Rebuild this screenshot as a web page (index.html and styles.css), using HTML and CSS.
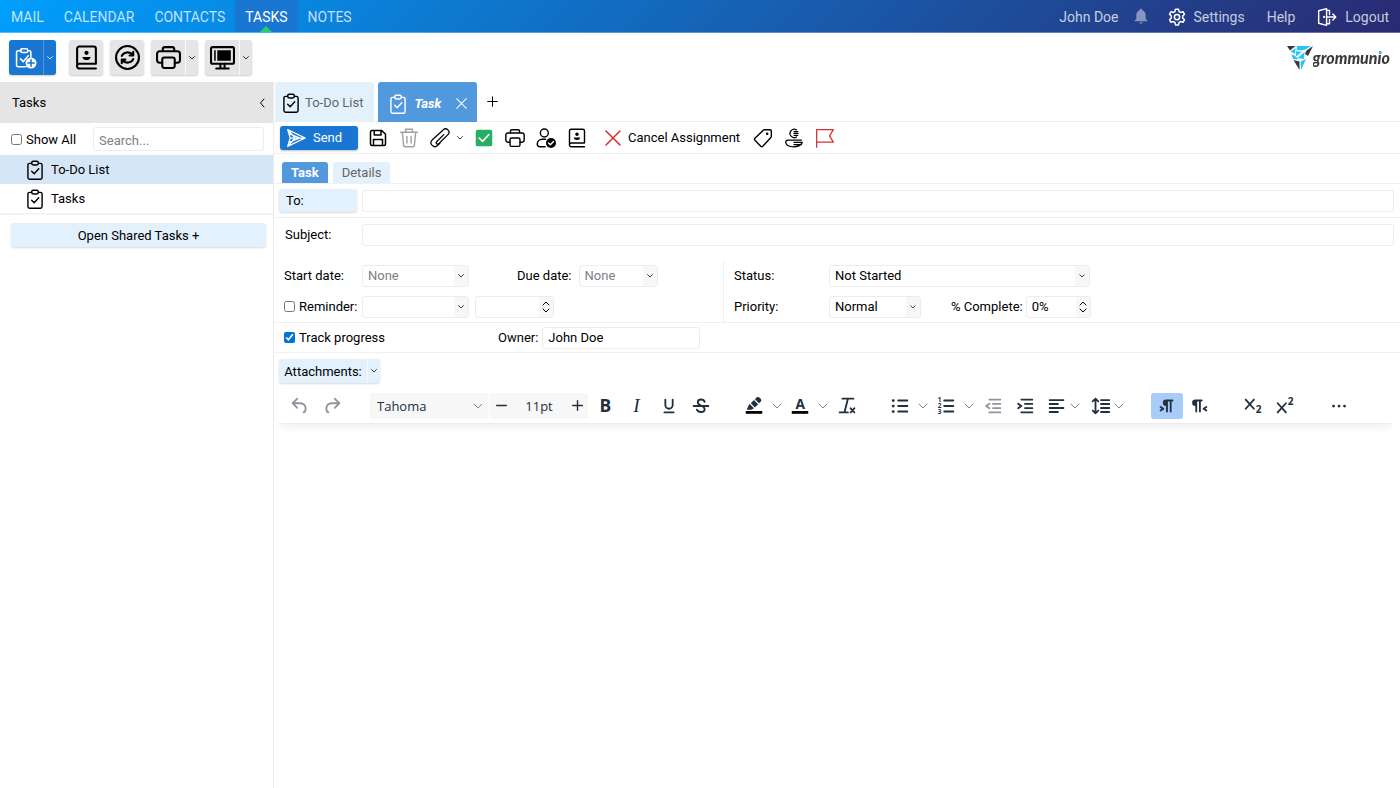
FILE: index.html
```html
<!DOCTYPE html>
<html lang="en">
<head>
    <meta charset="UTF-8">
    <meta name="viewport" content="width=device-width, initial-scale=1.0">
    <title>grommunio Web - Tasks</title>
    <link rel="stylesheet" href="styles.css">
</head>
<body>
    <!-- icon sprite -->
    <svg class="sprite" aria-hidden="true">
        <symbol id="i-task" viewBox="0 0 24 24"><path d="M8 4H5.500a2 2 0 0 0-2 2v15a2 2 0 0 0 2 2h13a2 2 0 0 0 2-2V6a2 2 0 0 0-2-2H16"/><rect x="8" y="1.500" width="8" height="4.500" rx="2"/><path d="m8 13.500 3 3 5.500-6"/></symbol>
        <symbol id="i-newtask" viewBox="0 0 24 24"><path d="M7 4H3.500A1.800 1.800 0 0 0 1.700 5.800v14a1.800 1.800 0 0 0 1.800 1.800H12M14 4h1.500a1.800 1.800 0 0 1 1.800 1.800V11"/><rect x="6" y="2" width="8" height="4" rx="1.800"/><path d="m6 13 3 3 5.500-6.500"/><circle cx="17.500" cy="17.500" r="6" fill="currentColor" stroke="none"/><path class="on-blue" d="M14 17.500h7M17.500 14v7"/></symbol>
        <symbol id="i-book" viewBox="0 0 24 24"><path d="M21 18H5a2 2 0 0 0-2 2 2 2 0 0 0 2 2.500h16M3 20V3.500A2 2 0 0 1 5 1.500h14a2 2 0 0 1 2 2V18"/><circle cx="12" cy="7.500" r="2" fill="currentColor" stroke="none"/><path d="M8 11.500h8q-.5 3-4 3t-4-3z" fill="currentColor" stroke="none"/></symbol>
        <symbol id="i-refresh" viewBox="0 0 24 24"><circle cx="12" cy="12" r="11"/><path d="M6.500 10.500C8 7 14 5.500 17 9.500M17.500 6.500v3.500H14M17.500 13.500C16 17 10 18.500 7 14.500M6.500 17.500V14H10"/></symbol>
        <symbol id="i-print" viewBox="0 0 24 24"><path d="M6.500 6V4a2 2 0 0 1 2-2h7a2 2 0 0 1 2 2v2M6 17H3.500A2.500 2.500 0 0 1 1 14.500v-6A2.500 2.500 0 0 1 3.500 6h17A2.500 2.500 0 0 1 23 8.500v6a2.500 2.500 0 0 1-2.500 2.500H18"/><rect x="6" y="12" width="12" height="10" rx="2"/></symbol>
        <symbol id="i-screen" viewBox="0 0 24 24"><rect x="1" y="2" width="22" height="16" rx="1.500"/><path d="M4 5h1.500v10H4zM7 5h13v10H7z" fill="currentColor" stroke="none"/><path d="M10 18v4M14 18v4M6 22.500h12"/></symbol>
        <symbol id="i-chev" viewBox="0 0 8 8"><path d="m1.500 2.500 2.500 2.500 2.500-2.500"/></symbol>
        <symbol id="i-left" viewBox="0 0 8 12"><path d="M6 2 2.500 6 6 10"/></symbol>
        <symbol id="i-spin" viewBox="0 0 10 14"><path d="M2 5l3-3 3 3M2 9l3 3 3-3"/></symbol>
        <symbol id="i-x" viewBox="0 0 16 16"><path d="M1 1l14 14M15 1 1 15"/></symbol>
        <symbol id="i-plus" viewBox="0 0 16 16"><path d="M8 1v14M1 8h14"/></symbol>
        <symbol id="i-minus" viewBox="0 0 16 16"><path d="M1 8h14"/></symbol>
        <symbol id="i-bell" viewBox="0 0 24 24"><path fill="currentColor" stroke="none" d="M12 1a2 2 0 0 0-2 2v.5C6.500 4.500 5 7.500 5 11v5l-2.500 3v1h19v-1L19 16v-5c0-3.500-1.500-6.500-5-7.500V3a2 2 0 0 0-2-2zM9.500 21.500a2.500 2 0 0 0 5 0z"/></symbol>
        <symbol id="i-gear" viewBox="0 0 24 24"><circle cx="12" cy="12" r="3.500"/><path d="M10 1.500h4l.8 3.200 2 1.200 3.200-1 2 3.500-2.400 2.300v2.600l2.400 2.300-2 3.500-3.200-1-2 1.200-.8 3.200h-4l-.8-3.200-2-1.200-3.200 1-2-3.500 2.400-2.300v-2.600L2 8.400l2-3.500 3.200 1 2-1.200z"/></symbol>
        <symbol id="i-door" viewBox="0 0 24 24"><path d="M2 4.500 11.500 2v20L2 19.500zM11.500 4H15v5M11.500 20H15v-5M12 12h10M19 8.500l3.500 3.500-3.500 3.500"/><circle cx="8.500" cy="12" r=".5"/></symbol>
        <symbol id="i-send" viewBox="0 0 24 24"><path d="M2 2 23 12 2 22l3-10zM5 12h17M2 2l9 10-9 10M4 7l13 5-13 5"/></symbol>
        <symbol id="i-save" viewBox="0 0 24 24"><path d="M2 4a2 2 0 0 1 2-2h13l5 5v13a2 2 0 0 1-2 2H4a2 2 0 0 1-2-2zM7 2v6h9V2M6 22v-8h12v8"/></symbol>
        <symbol id="i-trash" viewBox="0 0 24 24"><path d="M2 5h20M8 5V1.500h8V5M4 5l1.500 16a2 2 0 0 0 2 1.500h9a2 2 0 0 0 2-1.500L20 5M9.500 10v8M14.500 10v8"/></symbol>
        <symbol id="i-clip" viewBox="0 0 24 24"><path d="m16.500 8-8.500 8.500a1.700 1.700 0 0 0 2.500 2.400L21.500 8a4 4 0 0 0-5.700-5.700L2.500 14.500a4.600 4.600 0 0 0 6.500 6.500l3-3"/></symbol>
        <symbol id="i-check" viewBox="0 0 24 24"><rect x="1" y="1" width="22" height="22" rx="2.500" fill="currentColor" stroke="none"/><path class="on-green" d="m5.500 12 4.500 4.500 8.500-9"/></symbol>
        <symbol id="i-assign" viewBox="0 0 24 24"><circle cx="10" cy="6" r="4.800"/><path d="M11 22.500H4.500A3 3 0 0 1 1.500 19.500C1.500 16 4 13.500 7.500 13.500h4"/><circle cx="18" cy="18" r="6" fill="currentColor" stroke="none"/><path class="on-black" d="m15 18 2.200 2.200 3.800-4"/></symbol>
        <symbol id="i-tag" viewBox="0 0 24 24"><path d="M14 2h6.500A1.500 1.500 0 0 1 22 3.500V10q0 1-.8 1.800l-9.500 10q-1.200 1.200-2.400 0l-7-7q-1.200-1.200 0-2.400l10-9.700Q13 2 14 2z"/><circle cx="17" cy="7" r="1.500" fill="currentColor" stroke="none"/></symbol>
        <symbol id="i-private" viewBox="0 0 24 24"><path d="M15 2.300a5 5 0 1 0 0 8.400M12 4.300h4.500M12 6.500h5M12 8.700h4.500M21 14.500H5a3 3 0 0 0-3 3q1.500 5 9.500 5 7.500 0 9.800-4M12 17.300h10M12 19.900h9"/></symbol>
        <symbol id="i-flag" viewBox="0 0 24 24"><path d="M2 23V2h20l-4.500 7.500L22 17H2"/></symbol>
        <symbol id="i-undo" viewBox="0 0 24 24"><path d="M9 4 4 9l5 5M4 9h8c7 0 7.500 8 4 10"/></symbol>
        <symbol id="i-redo" viewBox="0 0 24 24"><path d="m15 4 5 5-5 5M20 9h-8c-7 0-7.500 8-4 10"/></symbol>
        <symbol id="i-down" viewBox="0 0 10 10"><path d="m1 3 4 4 4-4"/></symbol>
        <symbol id="i-bold" viewBox="0 0 24 24"><text x="6" y="19" font-size="19" font-weight="700">B</text></symbol>
        <symbol id="i-italic" viewBox="0 0 24 24"><text class="serif" x="8" y="19" font-size="21" font-style="italic">I</text></symbol>
        <symbol id="i-underline" viewBox="0 0 24 24"><path d="M8 5v6a4 4 0 0 0 8 0V5M7 19h10"/></symbol>
        <symbol id="i-strike" viewBox="0 0 24 24"><path d="M16 7.500C15 4 8.500 4 8.500 8c0 4.500 7.500 3 7.500 7.500 0 4-7 4-8.500.5M4 12h16"/></symbol>
        <symbol id="i-marker" viewBox="0 0 24 24"><path d="M3 19h18" class="bar"/><path fill="currentColor" stroke="none" d="m4 16 3-6.500 5 5L9 16zM8.500 9 12 5.500 16.500 10 13 13.500zM13 4.500l2-2q1.500-1 3 .3l1.500 1.600q1 1.400 0 2.700L17.500 9z"/></symbol>
        <symbol id="i-color" viewBox="0 0 24 24"><path d="M3 19h18" class="bar"/><text x="7" y="15" font-size="15" font-weight="700">A</text></symbol>
        <symbol id="i-clear" viewBox="0 0 24 24"><path d="M7 4h12M13 4l-3.500 14M4 19h9M16 14.500l4 4.500M20 14.500 16 19"/></symbol>
        <symbol id="i-bullets" viewBox="0 0 24 24"><path d="M10 6h10M10 12h10M10 18h10"/><path d="M4.500 6h.2M4.500 12h.2M4.500 18h.2" class="dots"/></symbol>
        <symbol id="i-numbers" viewBox="0 0 24 24"><path d="M10 6h10M10 12h10M10 18h10"/><text font-size="7" font-weight="700"><tspan x="3" y="8">1</tspan><tspan x="3" y="14.500">2</tspan><tspan x="3" y="21">3</tspan></text></symbol>
        <symbol id="i-outdent" viewBox="0 0 24 24"><path d="M8 5h12M12 9.700h8M12 14.300h8M8 19h12M8 9.500 4.500 12 8 14.500"/></symbol>
        <symbol id="i-indent" viewBox="0 0 24 24"><path d="M8 5h12M12 9.700h8M12 14.300h8M8 19h12M4.500 9.500 8 12l-3.500 2.500"/></symbol>
        <symbol id="i-align" viewBox="0 0 24 24"><path d="M4 5.500h15M4 9.800h9M4 14.200h15M4 18.500h9"/></symbol>
        <symbol id="i-lines" viewBox="0 0 24 24"><path d="M12 5.500h9M12 9.800h9M12 14.200h9M12 18.500h9M6 4v16M3 7l3-3 3 3M3 17l3 3 3-3"/></symbol>
        <symbol id="i-ltr" viewBox="0 0 24 24"><path fill="currentColor" stroke="none" d="M11 5h7a1 1 0 0 1 0 2h-1v11a1 1 0 0 1-2 0V7h-2v11a1 1 0 0 1-2 0v-6a3.500 3.500 0 0 1 0-7z"/><path d="M5 13l3 2-3 2"/></symbol>
        <symbol id="i-rtl" viewBox="0 0 24 24"><path fill="currentColor" stroke="none" d="M8 5h7a1 1 0 0 1 0 2h-1v11a1 1 0 0 1-2 0V7h-2v11a1 1 0 0 1-2 0v-6a3.500 3.500 0 0 1 0-7z"/><path d="M20 13l-3 2 3 2"/></symbol>
        <symbol id="i-sub" viewBox="0 0 24 24"><path d="m4 5 9 10M13 5 4 15"/><text x="15" y="20" font-size="11" font-weight="700">2</text></symbol>
        <symbol id="i-sup" viewBox="0 0 24 24"><path d="m4 9 9 10M13 9 4 19"/><text x="15" y="11" font-size="11" font-weight="700">2</text></symbol>
        <symbol id="i-more" viewBox="0 0 24 24"><path d="M6 12h.1M12 12h.1M18 12h.1" class="dots"/></symbol>
        <symbol id="i-logo" viewBox="0 0 26 24"><path class="dark" d="M0 0h8.500L3 4.500zM19.500 4.500 26 0l-5 10-3-2zM6.500 14l6 1.500V24z"/><path class="cyan" d="M10 0h14l-5.500 3.500-4 1L9.500 4zM3.500 5.500 8.500 2 8 8zM9 5l5.500 1L9 10.500zM10.500 12l7-6-.5 7zM4.500 8.500l3 1L12 13.500 6 13zM13.500 15.500 19 13 14 24z"/></symbol>
    </svg>

    <header class="topbar">
        <nav class="nav">
            <a href="#">MAIL</a>
            <a href="#">CALENDAR</a>
            <a href="#">CONTACTS</a>
            <a href="#" class="active">TASKS</a>
            <a href="#">NOTES</a>
        </nav>
        <nav class="user-nav">
            <a href="#">John Doe</a>
            <button class="bell" aria-label="Reminders"><svg class="ico s16"><use href="#i-bell"/></svg></button>
            <a href="#"><svg class="ico s18"><use href="#i-gear"/></svg>Settings</a>
            <a href="#">Help</a>
            <a href="#"><svg class="ico s20"><use href="#i-door"/></svg>Logout</a>
        </nav>
    </header>

    <div class="toolbar">
        <div class="tool primary">
            <button aria-label="New task"><svg class="ico s22"><use href="#i-newtask"/></svg></button>
            <button class="arrow" aria-label="More new items"><svg class="ico s8"><use href="#i-chev"/></svg></button>
        </div>
        <div class="tool"><button aria-label="Address book"><svg class="ico s24"><use href="#i-book"/></svg></button></div>
        <div class="tool"><button aria-label="Refresh"><svg class="ico s24"><use href="#i-refresh"/></svg></button></div>
        <div class="tool">
            <button aria-label="Print"><svg class="ico s24"><use href="#i-print"/></svg></button>
            <button class="arrow" aria-label="Print options"><svg class="ico s8"><use href="#i-chev"/></svg></button>
        </div>
        <div class="tool">
            <button aria-label="View"><svg class="ico s24"><use href="#i-screen"/></svg></button>
            <button class="arrow" aria-label="View options"><svg class="ico s8"><use href="#i-chev"/></svg></button>
        </div>
        <a href="#" class="logo"><svg class="logo-mark"><use href="#i-logo"/></svg><span>grommunio</span></a>
    </div>

    <div class="content">
        <aside class="sidebar">
            <div class="side-head">
                <span>Tasks</span>
                <button aria-label="Collapse"><svg class="ico collapse"><use href="#i-left"/></svg></button>
            </div>
            <div class="side-filter">
                <label><input type="checkbox">Show All</label>
                <input type="text" class="search" placeholder="Search..." aria-label="Search">
            </div>
            <ul class="folders">
                <li class="selected"><a href="#"><svg class="ico s20"><use href="#i-task"/></svg>To-Do List</a></li>
                <li><a href="#"><svg class="ico s20"><use href="#i-task"/></svg>Tasks</a></li>
            </ul>
            <button class="shared">Open Shared Tasks +</button>
        </aside>

        <main class="main">
            <div class="tabs">
                <a href="#" class="tab"><svg class="ico s20"><use href="#i-task"/></svg>To-Do List</a>
                <div class="tab current">
                    <svg class="ico s20"><use href="#i-task"/></svg><span>Task</span>
                    <button aria-label="Close tab"><svg class="ico thin s11"><use href="#i-x"/></svg></button>
                </div>
                <button class="add-tab" aria-label="New tab"><svg class="ico thin s11"><use href="#i-plus"/></svg></button>
            </div>

            <div class="actions">
                <button class="send"><svg class="ico s20"><use href="#i-send"/></svg>Send</button>
                <button class="act" aria-label="Save"><svg class="ico s18"><use href="#i-save"/></svg></button>
                <button class="act faded" aria-label="Delete"><svg class="ico s20"><use href="#i-trash"/></svg></button>
                <button class="act" aria-label="Attach"><svg class="ico thin s20"><use href="#i-clip"/></svg></button>
                <button class="arrow" aria-label="Attach options"><svg class="ico s8"><use href="#i-chev"/></svg></button>
                <button class="act green" aria-label="Mark complete"><svg class="ico s18"><use href="#i-check"/></svg></button>
                <button class="act" aria-label="Print"><svg class="ico s20"><use href="#i-print"/></svg></button>
                <button class="act" aria-label="Assign task"><svg class="ico s20"><use href="#i-assign"/></svg></button>
                <button class="act" aria-label="Address book"><svg class="ico s20"><use href="#i-book"/></svg></button>
                <button class="cancel"><svg class="ico thin s16"><use href="#i-x"/></svg>Cancel Assignment</button>
                <button class="act" aria-label="Categories"><svg class="ico s20"><use href="#i-tag"/></svg></button>
                <button class="act" aria-label="Private"><svg class="ico thin s20"><use href="#i-private"/></svg></button>
                <button class="act red" aria-label="Flag"><svg class="ico thin s20"><use href="#i-flag"/></svg></button>
            </div>

            <div class="subtabs">
                <button class="current">Task</button>
                <button>Details</button>
            </div>

            <div class="row to-row">
                <button class="to">To:</button>
                <input type="text" class="field" aria-label="To">
            </div>
            <div class="row subject-row">
                <label for="subject">Subject:</label>
                <input type="text" id="subject" class="field">
            </div>

            <div class="details">
                <div class="dates">
                    <div class="line">
                        <label for="start" class="lead">Start date:</label>
                        <div class="combo w107"><input type="text" id="start" placeholder="None"><button aria-label="Pick start date"><svg class="ico s8"><use href="#i-chev"/></svg></button></div>
                        <label for="due" class="due">Due date:</label>
                        <div class="combo w79"><input type="text" id="due" placeholder="None"><button aria-label="Pick due date"><svg class="ico s8"><use href="#i-chev"/></svg></button></div>
                    </div>
                    <div class="line">
                        <label class="lead check"><input type="checkbox">Reminder:</label>
                        <div class="combo w107"><input type="text" aria-label="Reminder date"><button aria-label="Pick reminder date"><svg class="ico s8"><use href="#i-chev"/></svg></button></div>
                        <div class="combo w79 second"><input type="text" aria-label="Reminder time"><button aria-label="Change time"><svg class="ico spin"><use href="#i-spin"/></svg></button></div>
                    </div>
                </div>
                <div class="status">
                    <div class="line">
                        <label for="status" class="lead">Status:</label>
                        <select id="status" class="w261"><option>Not Started</option><option>In Progress</option><option>Complete</option></select>
                    </div>
                    <div class="line">
                        <label for="priority" class="lead">Priority:</label>
                        <select id="priority" class="w92"><option>Normal</option><option>Low</option><option>High</option></select>
                        <label for="percent" class="percent">% Complete:</label>
                        <div class="combo w65"><input type="text" id="percent" value="0%"><button aria-label="Change percent"><svg class="ico spin"><use href="#i-spin"/></svg></button></div>
                    </div>
                </div>
            </div>

            <div class="row track-row">
                <label class="check"><input type="checkbox" checked>Track progress</label>
                <label for="owner" class="owner">Owner:</label>
                <input type="text" id="owner" class="field" value="John Doe">
            </div>

            <div class="attachments">
                <button>Attachments:</button>
                <button class="arrow" aria-label="Attachment options"><svg class="ico s8"><use href="#i-chev"/></svg></button>
            </div>

            <div class="editor-bar">
                <div class="group dim">
                    <button aria-label="Undo"><svg class="ico"><use href="#i-undo"/></svg></button>
                    <button aria-label="Redo"><svg class="ico"><use href="#i-redo"/></svg></button>
                </div>
                <div class="group">
                    <select class="font" aria-label="Font"><option>Tahoma</option><option>Arial</option></select>
                    <div class="size">
                        <button aria-label="Smaller"><svg class="ico s11"><use href="#i-minus"/></svg></button>
                        <input type="text" value="11pt" aria-label="Font size">
                        <button aria-label="Larger"><svg class="ico s11"><use href="#i-plus"/></svg></button>
                    </div>
                    <button aria-label="Bold"><svg class="ico"><use href="#i-bold"/></svg></button>
                    <button aria-label="Italic"><svg class="ico"><use href="#i-italic"/></svg></button>
                    <button aria-label="Underline"><svg class="ico"><use href="#i-underline"/></svg></button>
                    <button aria-label="Strikethrough"><svg class="ico"><use href="#i-strike"/></svg></button>
                </div>
                <div class="group">
                    <button class="wide" aria-label="Highlight"><svg class="ico"><use href="#i-marker"/></svg><svg class="ico drop"><use href="#i-down"/></svg></button>
                    <button class="wide" aria-label="Text color"><svg class="ico"><use href="#i-color"/></svg><svg class="ico drop"><use href="#i-down"/></svg></button>
                    <button aria-label="Clear formatting"><svg class="ico"><use href="#i-clear"/></svg></button>
                </div>
                <div class="group">
                    <button class="wide" aria-label="Bullet list"><svg class="ico"><use href="#i-bullets"/></svg><svg class="ico drop"><use href="#i-down"/></svg></button>
                    <button class="wide" aria-label="Numbered list"><svg class="ico"><use href="#i-numbers"/></svg><svg class="ico drop"><use href="#i-down"/></svg></button>
                    <button class="dim" aria-label="Decrease indent"><svg class="ico"><use href="#i-outdent"/></svg></button>
                    <button aria-label="Increase indent"><svg class="ico"><use href="#i-indent"/></svg></button>
                    <button class="menu" aria-label="Align"><svg class="ico"><use href="#i-align"/></svg><svg class="ico drop"><use href="#i-down"/></svg></button>
                    <button class="menu" aria-label="Line height"><svg class="ico"><use href="#i-lines"/></svg><svg class="ico drop"><use href="#i-down"/></svg></button>
                </div>
                <div class="group">
                    <button class="on" aria-label="Left to right"><svg class="ico"><use href="#i-ltr"/></svg></button>
                    <button aria-label="Right to left"><svg class="ico"><use href="#i-rtl"/></svg></button>
                </div>
                <div class="group">
                    <button aria-label="Subscript"><svg class="ico"><use href="#i-sub"/></svg></button>
                    <button aria-label="Superscript"><svg class="ico"><use href="#i-sup"/></svg></button>
                </div>
                <div class="group">
                    <button aria-label="More"><svg class="ico"><use href="#i-more"/></svg></button>
                </div>
            </div>
            <div class="editor" contenteditable="true" role="textbox" aria-label="Task body"></div>
        </main>
    </div>
</body>
</html>
```
FILE: styles.css
```css
* {
    box-sizing: border-box;
}
body {
    margin: 0;
    min-height: 100vh;
    display: flex;
    flex-direction: column;
    font-family: Roboto, sans-serif;
    font-size: 13px;
    color: #000;
    background-color: #fff;
}
button, input, select {
    font: inherit;
    color: inherit;
}
button {
    display: flex;
    align-items: center;
    justify-content: center;
    margin: 0;
    padding: 0;
    border: none;
    background: none;
    cursor: pointer;
}
a {
    color: inherit;
    text-decoration: none;
}
input[type="text"] {
    min-width: 0;
    outline: none;
}
input::placeholder {
    color: #808080;
}
input[type="checkbox"] {
    width: 11px;
    height: 11px;
    margin: 0 4px 0 0;
    accent-color: #0075d7;
}

/* icons */
.sprite {
    display: none;
}
.ico {
    flex: none;
    width: 22px;
    height: 22px;
    fill: none;
    stroke: currentColor;
    stroke-width: 2;
    stroke-linecap: round;
    stroke-linejoin: round;
}
.s8 { width: 8px; height: 8px; stroke-width: 1; opacity: 0.75; }
.s11 { width: 11px; height: 11px; }
.s16 { width: 16px; height: 16px; }
.s18 { width: 18px; height: 18px; }
.s20 { width: 20px; height: 20px; stroke-width: 1.7; }
.s22 { width: 22px; height: 22px; stroke-width: 1.7; }
.s24 { width: 25px; height: 25px; }
.collapse { width: 8px; height: 12px; stroke-width: 1; }
.spin { width: 10px; height: 14px; stroke-width: 1; }
.ico.thin {
    stroke-width: 1.5;
}
symbol text {
    fill: currentColor;
    stroke: none;
    font-family: "Open Sans", sans-serif;
}
symbol .serif {
    font-family: "Liberation Serif", serif;
}
.on-blue { stroke: #1976d2; }
.on-green { stroke: #fff; }
.on-black { stroke: #fff; }
.bar { stroke: #000; stroke-width: 3; stroke-linecap: butt; }
.dots { stroke-width: 3; }

/* top bar */
.topbar {
    display: flex;
    justify-content: space-between;
    height: 33px;
    background: linear-gradient(135deg, #009ffd, #2a2a72);
    border-bottom: 1px solid rgba(255, 255, 255, 0.3);
    color: rgba(255, 255, 255, 0.75);
    font-size: 14px;
}
.nav, .user-nav {
    display: flex;
}
.nav {
    padding-left: 1px;
}
.nav a, .user-nav a {
    display: flex;
    align-items: center;
    gap: 8px;
    padding: 1px 10px 0;
}
.user-nav a {
    padding: 1px 11px 0;
}
.user-nav .ico {
    color: #fff;
}
.user-nav .bell {
    padding: 0 8px 0 3px;
}
.user-nav .bell .ico {
    color: #8795c0;
}
.nav .active {
    position: relative;
    background-color: #1976d2;
    color: #fff;
}
.nav .active::after {
    content: "";
    position: absolute;
    bottom: 0;
    left: 50%;
    margin-left: -6px;
    border: 6px solid transparent;
    border-top: none;
    border-bottom-color: #2ecc71;
}

/* main toolbar */
.toolbar {
    display: flex;
    align-items: center;
    gap: 7px;
    height: 49px;
    padding: 0 10px 0 9px;
}
.tool {
    display: flex;
    height: 35px;
    border-radius: 3px;
    background-color: #e5e5e5;
    box-shadow: 0 1px 2px rgba(0, 0, 0, 0.2);
}
.tool button {
    width: 34px;
}
.tool .arrow {
    width: 13px;
    border-left: 1px solid #fafafa;
}
.primary {
    margin-right: 6px;
    background-color: #1976d2;
    color: #fff;
}
.primary .arrow {
    border-left-color: #5298dd;
}
.logo {
    display: flex;
    align-items: center;
    margin-left: auto;
    font: italic 900 16px Lato, sans-serif;
}
.logo span {
    color: transparent;
    background: linear-gradient(#29c4f6, #29c4f6) 88% top / 8px 7px no-repeat, linear-gradient(#393939, #393939);
    -webkit-background-clip: text;
    background-clip: text;
}
.logo-mark {
    width: 26px;
    height: 24px;
}
.dark { fill: #393939; }
.cyan { fill: #29c4f6; }

.content {
    display: flex;
    flex: 1;
}

/* sidebar */
.sidebar {
    width: 274px;
    flex: none;
    border-right: 1px solid #ececec;
}
.side-head {
    display: flex;
    justify-content: space-between;
    align-items: center;
    height: 41px;
    padding: 0 7px 0 12px;
    background-color: #e5e5e5;
}
.side-filter {
    display: flex;
    align-items: center;
    gap: 17px;
    height: 32px;
    padding: 0 9px 0 11px;
}
.side-filter label, .check {
    display: flex;
    align-items: center;
}
.search {
    flex: 1;
    height: 24px;
    padding: 2px 5px 0;
    border: 1px solid #ececec;
    border-radius: 3px;
}
.folders {
    list-style: none;
    margin: 0;
    padding: 0;
    border-bottom: 2px solid #f4f4f4;
}
.folders a {
    display: flex;
    align-items: center;
    gap: 6px;
    height: 29px;
    padding-left: 25px;
}
.folders .selected {
    background-color: #d5e7f7;
}
.shared {
    width: calc(100% - 18px);
    height: 24px;
    margin: 8px 7px 0 11px;
    border-radius: 3px;
    background-color: #e3f1fd;
    box-shadow: 0 1px 2px rgba(0, 0, 0, 0.15);
}

/* content tabs */
.main {
    flex: 1;
    min-width: 0;
    display: flex;
    flex-direction: column;
}
.tabs {
    display: flex;
    gap: 4px;
    height: 40px;
    padding-left: 1px;
    border-bottom: 1px solid #f0f0f0;
}
.tab {
    display: flex;
    align-items: center;
    gap: 4px;
    height: 40px;
    padding: 1px 11px 0 6px;
    background-color: #e3f1fd;
    border-radius: 3px 3px 0 0;
    color: #666;
}
.tab .ico {
    color: #000;
}
.tab.current {
    gap: 6px;
    padding: 3px 10px 0;
    background-color: #5298dd;
    color: #fff;
    font-weight: 700;
    font-style: italic;
}
.tab.current .ico {
    color: #fff;
}
.tab.current button {
    margin-left: 9px;
}
.add-tab {
    padding: 0 6px;
}

/* task actions */
.actions {
    display: flex;
    align-items: center;
    height: 32px;
    padding-left: 6px;
    border-bottom: 1px solid #f0f0f0;
}
.send {
    gap: 7px;
    width: 78px;
    height: 24px;
    margin-right: 4px;
    padding-right: 10px;
    border-radius: 3px;
    background-color: #1976d2;
    box-shadow: 0 1px 2px rgba(0, 0, 0, 0.25);
    color: #fff;
}
.send .ico {
    stroke-width: 1.5;
}
.act {
    width: 31px;
    height: 24px;
}
.faded {
    color: #a0a0a0;
}
.actions .arrow {
    width: 13px;
    height: 20px;
    padding-right: 4px;
}
.green { color: #27ae60; }
.red, .cancel .ico { color: #d3302f; }
.cancel {
    gap: 7px;
    margin: 0 7px 0 13px;
}
.subtabs {
    display: flex;
    align-items: flex-end;
    gap: 5px;
    height: 30px;
    padding-left: 8px;
    border-bottom: 1px solid #f0f0f0;
}
.subtabs button {
    height: 21px;
    padding: 0 9px;
    border-radius: 3px 3px 0 0;
    background-color: #e3f1fd;
    color: #666;
}
.subtabs .current {
    background-color: #5298dd;
    color: #fff;
    font-weight: 700;
}

/* form */
.row {
    display: flex;
    align-items: center;
    padding: 0 6px 0 11px;
}
.field {
    flex: 1;
    height: 22px;
    padding: 0 5px;
    border: 1px solid #ececec;
    border-radius: 3px;
}
.to-row {
    gap: 5px;
    height: 34px;
    padding-left: 5px;
    border-bottom: 1px solid #f0f0f0;
}
.to {
    justify-content: flex-start;
    width: 78px;
    height: 23px;
    padding-left: 7px;
    border-radius: 3px;
    background-color: #e3f1fd;
    box-shadow: 0 1px 2px rgba(0, 0, 0, 0.15);
}
.subject-row {
    height: 33px;
}
.subject-row label {
    width: 77px;
}
.details {
    display: flex;
    padding-top: 9px;
    border-bottom: 1px solid #f0f0f0;
}
.dates, .status {
    display: flex;
    flex-direction: column;
}
.dates {
    width: 449px;
    padding-left: 10px;
}
.status {
    padding-left: 10px;
    border-left: 1px solid #f0f0f0;
}
.line {
    display: flex;
    align-items: center;
    height: 31px;
}
.dates .lead { width: 78px; }
.status .lead { width: 95px; }
.due {
    margin: 0 7px 0 48px;
}
.percent {
    margin: 0 3px 0 30px;
}
.combo, .line select {
    display: flex;
    height: 22px;
    border: 1px solid #ececec;
    border-radius: 3px;
}
.combo input {
    flex: 1;
    padding: 0 5px;
    border: none;
    background: none;
}
.combo button {
    width: 14px;
    flex: none;
    background-color: #f7f7f7;
}
.line select {
    appearance: none;
    padding: 0 18px 0 5px;
    background: url("data:image/svg+xml,%3Csvg xmlns='http://www.w3.org/2000/svg' width='14' height='22'%3E%3Cpath d='M0 0h14v22H0z' fill='%23f7f7f7'/%3E%3Cpath d='m4.500 9.500 2.500 2.500 2.500-2.500' fill='none' stroke='%23444'/%3E%3C/svg%3E") right center no-repeat;
}
.w65 { width: 65px; }
.w79 { width: 79px; }
.w92 { width: 92px; }
.w107 { width: 107px; }
.w261 { width: 261px; }
.second {
    margin-left: 6px;
}
.track-row {
    height: 30px;
    padding-left: 10px;
    border-bottom: 1px solid #f0f0f0;
}
.track-row .check {
    width: 214px;
}
.owner {
    margin-right: 4px;
}
.track-row .field {
    flex: none;
    width: 158px;
}
.attachments {
    display: flex;
    width: 101px;
    height: 24px;
    margin: 6px 0 0 5px;
    border-radius: 3px;
    background-color: #e3f1fd;
    box-shadow: 0 1px 2px rgba(0, 0, 0, 0.15);
}
.attachments button {
    flex: none;
    width: 88px;
}
.attachments .arrow {
    width: 13px;
    border-left: 1px solid #f4f9fe;
}

/* editor */
.editor-bar {
    display: flex;
    align-items: center;
    gap: 22px;
    height: 35px;
    margin: 5px 6px 0 2px;
    padding-left: 8px;
    box-shadow: 0 2px 2px -2px rgba(34, 47, 62, 0.1), 0 8px 8px -4px rgba(34, 47, 62, 0.07);
    color: #222f3e;
    font-family: "Open Sans", sans-serif;
}
.group {
    display: flex;
}
.group button {
    width: 32px;
    height: 26px;
    border-radius: 3px;
}
.group .wide, .group .menu {
    gap: 7px;
    width: 46px;
}
.group .menu {
    gap: 2px;
    width: 44px;
}
.drop {
    width: 10px;
    height: 10px;
    stroke-width: 1;
    color: #7a828b;
}
.dim {
    color: #90979e;
}
.group .on {
    background-color: #a6ccf7;
}
.font {
    width: 119px;
    height: 26px;
    margin-right: 1px;
    padding: 0 24px 0 7px;
    appearance: none;
    border: none;
    border-radius: 3px;
    background: #f7f7f7 url("data:image/svg+xml,%3Csvg xmlns='http://www.w3.org/2000/svg' width='10' height='10'%3E%3Cpath d='m1 3 4 4 4-4' fill='none' stroke='%237a828b'/%3E%3C/svg%3E") right 6px center no-repeat;
}
.size {
    display: flex;
    width: 98px;
    margin-right: 1px;
    border-radius: 3px;
    background-color: #f7f7f7;
}
.size button {
    flex: none;
    width: 22px;
}
.size input {
    width: 54px;
    padding: 0;
    border: none;
    background: none;
    text-align: center;
}
.editor {
    flex: 1;
    outline: none;
}
```
